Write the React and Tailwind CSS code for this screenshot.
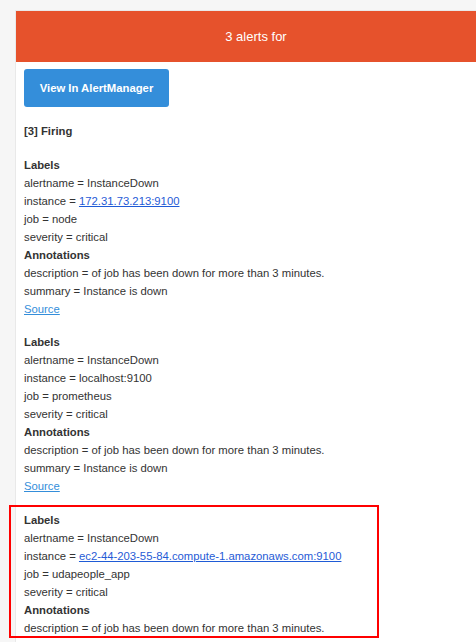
import React from "react";

const font = { fontFamily: '"Liberation Sans", Arial, Helvetica, sans-serif' };

function Line({ children }) {
  return <div className="h-[18px] leading-[18px]">{children}</div>;
}

function Block({ instance, link, job, className = "" }) {
  return (
    <div className={className}>
      <Line><strong>Labels</strong></Line>
      <Line>alertname = InstanceDown</Line>
      <Line>
        instance ={" "}
        {link ? (
          <a href="#" className="text-[#1f5bd6] underline">{instance}</a>
        ) : (
          instance
        )}
      </Line>
      <Line>job = {job}</Line>
      <Line>severity = critical</Line>
      <Line><strong>Annotations</strong></Line>
      <Line>description = of job has been down for more than 3 minutes.</Line>
      <Line>summary = Instance is down</Line>
      <Line>
        <a href="#" className="text-[#348eda] underline">Source</a>
      </Line>
    </div>
  );
}

export default function App() {
  return (
    <div className="relative w-[476px] h-[642px] overflow-hidden bg-[#f6f6f6]" style={font}>
      <div className="pt-[10px] pl-[15px]">
        <div className="w-[482px] border border-[#e9e9e9] bg-white">
          <div className="h-[51px] bg-[#e6522c] flex items-center justify-center text-white text-[13px]">
            3 alerts for
          </div>
          <div className="px-[8px] pt-[7px] text-[11.3px] text-[#333]">
            <div className="w-[145px] h-[38px] rounded-[3px] bg-[#348eda] text-white font-bold flex items-center justify-center">
              View In AlertManager
            </div>
            <div className="mt-[15px]">
              <Line><strong>[3] Firing</strong></Line>
            </div>
            <Block className="mt-[16px]" instance="172.31.73.213:9100" link job="node" />
            <Block className="mt-[15px]" instance="localhost:9100" job="prometheus" />
            <Block className="mt-[16px]" instance="ec2-44-203-55-84.compute-1.amazonaws.com:9100" link job="udapeople_app" />
          </div>
        </div>
      </div>
      <div className="absolute left-[9px] top-[505px] w-[370px] h-[133px] border-2 border-[#ff0000]" />
    </div>
  );
}
